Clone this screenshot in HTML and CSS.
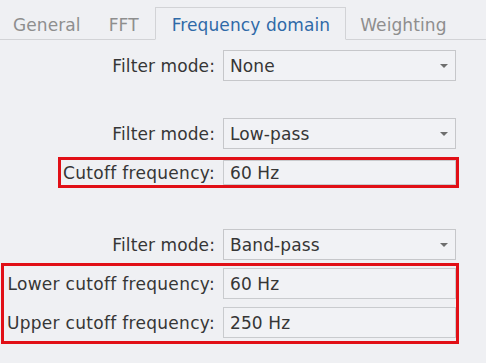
FILE: index.html
```html
<!DOCTYPE html>
<html lang="en">
<head>
    <meta charset="UTF-8">
    <meta name="viewport" content="width=device-width, initial-scale=1.0">
    <title>Frequency domain</title>
    <link rel="stylesheet" href="styles.css">
</head>
<body>
    <div class="tabs">
        <div class="tab">General</div>
        <div class="tab">FFT</div>
        <div class="tab active">Frequency domain</div>
        <div class="tab">Weighting</div>
        <div class="tab-fill"></div>
    </div>

    <div class="form">
        <div class="row first">
            <span class="label">Filter mode:</span>
            <div class="field combo">None<span class="arrow"></span></div>
        </div>

        <div class="row gap">
            <span class="label">Filter mode:</span>
            <div class="field combo">Low-pass<span class="arrow"></span></div>
        </div>
        <div class="mark single">
            <div class="row">
                <span class="label">Cutoff frequency:</span>
                <div class="field">60 Hz</div>
            </div>
        </div>

        <div class="row gap wide">
            <span class="label">Filter mode:</span>
            <div class="field combo">Band-pass<span class="arrow"></span></div>
        </div>
        <div class="mark double">
            <div class="row">
                <span class="label">Lower cutoff frequency:</span>
                <div class="field">60 Hz</div>
            </div>
            <div class="row">
                <span class="label">Upper cutoff frequency:</span>
                <div class="field">250 Hz</div>
            </div>
        </div>
    </div>
</body>
</html>
```

FILE: styles.css
```css
body {
    margin: 0;
    background-color: #eff0f3;
    font-family: "DejaVu Sans", Verdana, sans-serif;
    font-size: 17px;
    letter-spacing: 0.1px;
    color: #363636;
}

.tabs {
    display: flex;
    align-items: flex-end;
    height: 40px;
    padding-top: 7px;
    box-sizing: border-box;
}

.tab {
    height: 32px;
    display: flex;
    align-items: center;
    padding: 3px 16px 0 14px;
    box-sizing: border-box;
    color: #8e8e8e;
    border-bottom: 1px solid #d2d3d6;
}

.tab:first-child {
    padding-left: 13px;
    padding-right: 14px;
}

.tab.active {
    height: 33px;
    padding: 3px 15px 0 16px;
    color: #2f6aa8;
    border: 1px solid #d2d3d6;
    border-bottom: 1px solid #eff0f3;
}

.tab-fill {
    flex: 1;
    height: 32px;
    border-bottom: 1px solid #d2d3d6;
}

.form {
    width: 459px;
    display: flex;
    flex-direction: column;
    align-items: flex-end;
}

.row {
    display: flex;
    align-items: center;
    justify-content: flex-end;
    gap: 8px;
    margin-right: 3px;
}

.row.first {
    margin-top: 10px;
}

.row.gap {
    margin-top: 37px;
}

.row.wide {
    margin-top: 41px;
}

.label {
    white-space: nowrap;
}

.field {
    width: 233px;
    height: 31px;
    box-sizing: border-box;
    border: 1px solid #c9cbce;
    background-color: #f1f2f5;
    padding-left: 6px;
    display: flex;
    align-items: center;
    position: relative;
}

.combo {
    border-color: #c6c7ca;
}

.arrow {
    position: absolute;
    right: 7px;
    top: 13px;
    width: 0;
    height: 0;
    border-left: 4px solid transparent;
    border-right: 4px solid transparent;
    border-top: 4px solid #6e6e6e;
}

.mark {
    border: 3px solid #e10f16;
    display: flex;
    flex-direction: column;
}

.mark .row {
    margin-right: 0;
}

.mark .label {
    letter-spacing: 0.3px;
}

.mark.single {
    margin-top: 8px;
    padding: 0 0 0 2px;
}

.mark.single .field {
    height: 25px;
}

.mark.double {
    margin-top: 3px;
    padding: 2px 0 3px 3px;
    gap: 8px;
}
```
